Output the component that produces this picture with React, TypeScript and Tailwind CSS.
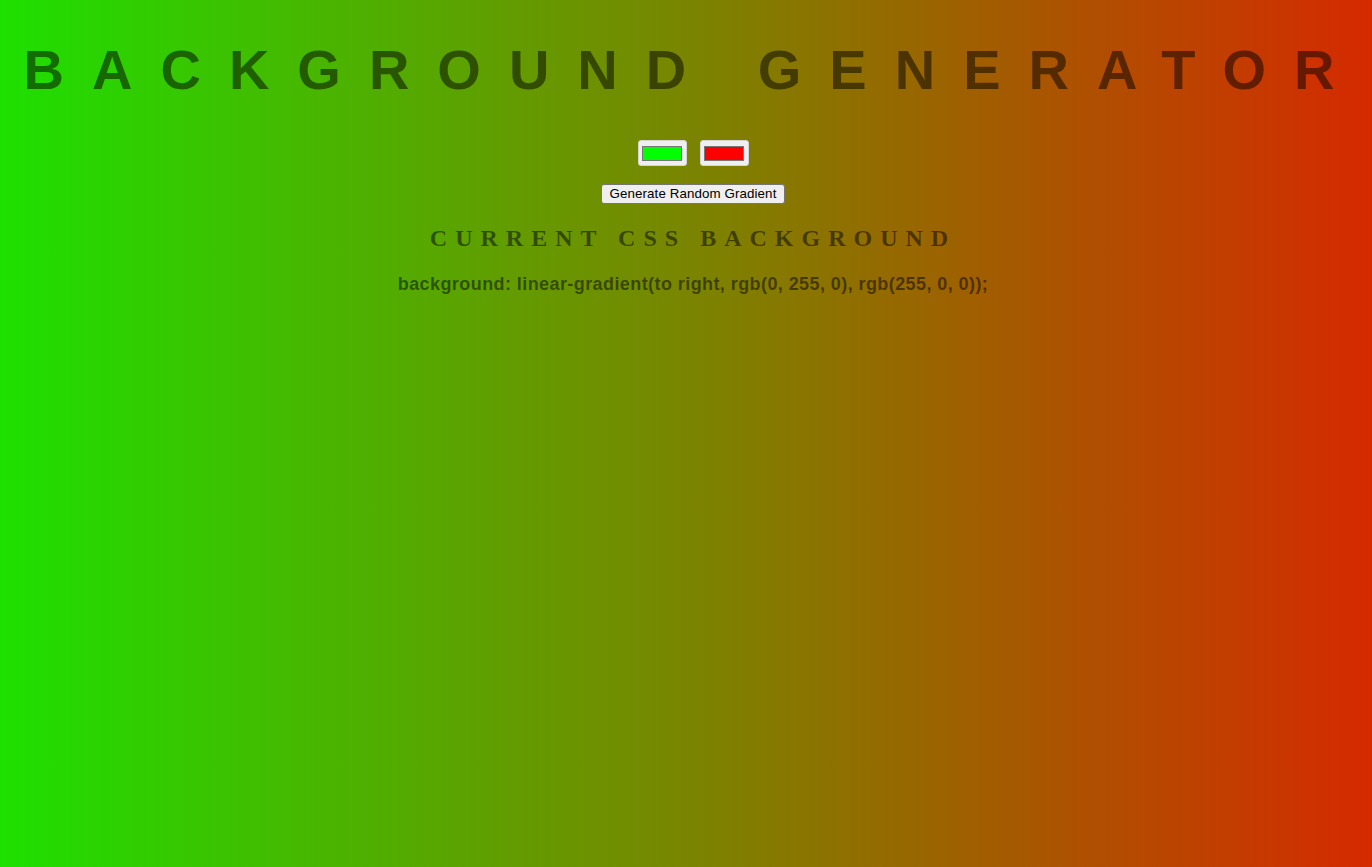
const css =
  "background: linear-gradient(to right, rgb(0, 255, 0), rgb(255, 0, 0));";

function ColorSwatch({ fill }: { fill: string }) {
  return (
    <div className="flex h-[26px] w-[49px] items-center justify-center rounded-[3px] border border-[#d4d4d4] bg-[#efefef]">
      <div className={`h-[15px] w-[40px] border border-[#777777] ${fill}`} />
    </div>
  );
}

export default function App() {
  return (
    <div className="min-h-screen w-full overflow-hidden bg-[linear-gradient(to_right,rgb(30,224,0),rgb(213,42,0))] pl-[14px] text-center font-['Liberation_Sans',Arial,sans-serif]">
      <h1 className="pt-[38px] text-[56px] font-bold leading-[64px] tracking-[28px] whitespace-nowrap text-black/50">
        BACKGROUND GENERATOR
      </h1>

      <div className="mt-[38px] flex justify-center gap-[13px]">
        <ColorSwatch fill="bg-[#00ff00]" />
        <ColorSwatch fill="bg-[#ff0000]" />
      </div>

      <div className="mt-[18px] flex justify-center">
        <button className="h-[20px] rounded-[3px] border border-[#767676] bg-[#efefef] px-[8px] text-[13.33px] leading-[16px] tracking-[0.1px] text-black">
          Generate Random Gradient
        </button>
      </div>

      <h3 className="mt-[20px] font-['Liberation_Serif','Times_New_Roman',serif] text-[24px] font-bold leading-[28px] tracking-[8px] text-black/50">
        CURRENT CSS BACKGROUND
      </h3>

      <p className="mt-[21px] text-[18px] font-bold leading-[22px] tracking-[0.42px] text-black/50">
        {css}
      </p>
    </div>
  );
}
